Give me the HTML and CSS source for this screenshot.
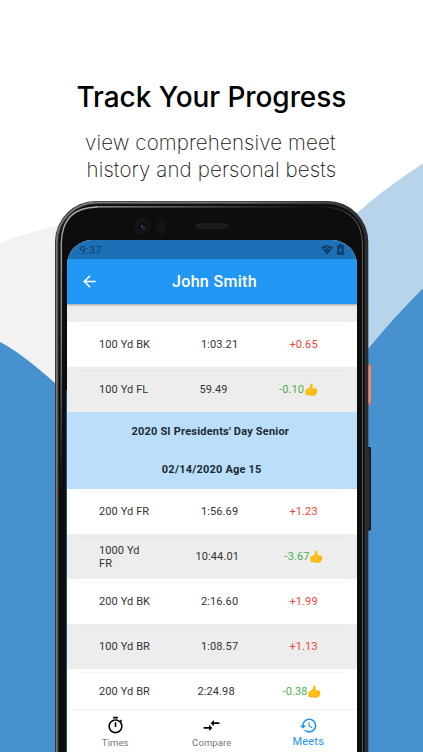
FILE: index.html
```
<!DOCTYPE html>
<html lang="en">
<head>
<meta charset="utf-8">
<title>Track Your Progress</title>
<link rel="stylesheet" href="styles.css">
</head>
<body>
<svg class="backdrop" viewBox="0 0 423 752" aria-hidden="true">
  <defs>
    <linearGradient id="edge" x1="55" x2="368" y1="0" y2="0" gradientUnits="userSpaceOnUse">
      <stop offset="0" stop-color="#777a76"/><stop offset=".6" stop-color="#6c6f6a"/><stop offset="1" stop-color="#303030"/>
    </linearGradient>
    <linearGradient id="shine" x1="0" x2="0" y1="206" y2="490" gradientUnits="userSpaceOnUse">
      <stop offset="0" stop-color="#aaa"/><stop offset=".5" stop-color="#777"/><stop offset="1" stop-color="#0d0d0e"/>
    </linearGradient>
    <linearGradient id="topshine" x1="95" x2="315" y1="0" y2="0" gradientUnits="userSpaceOnUse">
      <stop offset="0" stop-color="#aaa"/><stop offset="1" stop-color="#0d0d0e"/>
    </linearGradient>
    <linearGradient id="sideshine" x1="315" x2="362" y1="0" y2="0" gradientUnits="userSpaceOnUse">
      <stop offset="0" stop-color="#0d0d0e"/><stop offset="1" stop-color="#555"/>
    </linearGradient>
  </defs>
  <path fill="#f2f2f2" d="M0 243Q28 232 65 224V420H0z"/>
  <path fill="#b8d4ea" d="M423 163.500Q382 190 355 215V400H423z"/>
  <path fill="#4691ce" d="M0 342Q20 352 55 383L80 405V752H0zM423 288.500Q394 317 368 349L350 370V752H423z"/>
  <rect x="366" y="364" width="5.200" height="41" rx="1" fill="#d66f5b"/>
  <rect x="368" y="366" width="2.500" height="37" fill="#ed9884"/>
  <rect x="366" y="447" width="5" height="83.500" rx="1" fill="#151617"/>
  <rect x="368" y="449" width="1.500" height="79" fill="#303334"/>
  <rect x="55" y="201" width="313.300" height="620" rx="41" fill="#242625"/>
  <rect x="56.700" y="202.500" width="309.800" height="620" rx="39.500" fill="none" stroke="url(#edge)" stroke-width="1.800"/>
  <rect x="59" y="204.300" width="305.500" height="620" rx="37.500" fill="#0d0d0e"/>
  <path d="M61.300 490V243Q62 207.500 97 207" fill="none" stroke="url(#shine)" stroke-width="1.500"/>
  <path d="M96 206.300H315V207.500H96z" fill="url(#topshine)"/>
  <path d="M315 206.600Q362.500 205 362.500 246V752" fill="none" stroke="url(#sideshine)" stroke-width="1.100"/>
  <circle cx="142" cy="226.500" r="8.500" fill="#131415"/><circle cx="142.500" cy="226.500" r="4.200" fill="#0b0b10"/>
  <circle cx="143.500" cy="228" r="2" fill="#24263e"/><circle cx="141.700" cy="226" r=".7" fill="#8c909d"/>
  <rect x="157" y="219" width="8" height="16" rx="3.500" fill="#131314"/>
  <rect x="195" y="223" width="33" height="6" rx="3" fill="#1b1c1c"/>
  <path d="M66.400 390V752" stroke="#275778"/>
</svg>
<svg class="defs" aria-hidden="true">
  <symbol id="thumb" viewBox="0 0 13 13">
    <path fill="#fdbf16" d="M.6 6.600Q3.600 5.800 4.900 3.400L5.300 1.200Q5.700.2 6.700.6Q8 1.300 7.700 3.300L7.300 5.200H10.800Q12 5.400 11.900 6.500Q12.500 7.300 12.100 8.200Q12.400 9.100 11.800 9.900Q11.900 11 10.900 11.400Q10.600 12.300 9.600 12.400H5.500Q3.500 11.700.6 11.900Q-.1 9 .6 6.600z"/>
    <path fill="none" stroke="#f39a1c" stroke-width=".5" d="M8.600 7.500H11.500M8.700 9.500H11.400M1 11.700Q4 11.300 5.800 12.200H9.400"/>
  </symbol>
</svg>
<main class="page">
  <h1 class="title">Track Your Progress</h1>
  <p class="subtitle"><span class="line first">view comprehensive meet</span><span class="line second">history and personal bests</span></p>
  <section class="screen">
    <div class="status">
      <span class="clock">9:37</span>
      <svg class="wifi" viewBox="0 0 12 10"><path fill="#124068" d="M6 10L0 2.500Q6-2 12 2.500z"/><path fill="none" stroke="#1c70b6" stroke-width=".9" d="M2 4.100Q6 1.200 10 4.100"/></svg>
      <svg class="battery" viewBox="0 0 7 11"><path fill="#124068" d="M2.200 0H4.800V1.200H6.300Q7 1.200 7 2V10.200Q7 11 6.200 11H.8Q0 11 0 10.200V2Q0 1.200.7 1.200H2.200z"/><path fill="#1c70b6" d="M3.900 3L1.600 6.700H3.200V9.300L5.500 5.600H3.900z"/></svg>
    </div>
    <header class="appbar">
      <svg class="back" viewBox="0 0 24 24"><path fill="#fff" d="M20 11H7.830l5.590-5.590L12 4l-8 8 8 8 1.410-1.410L7.830 13H20v-2z"/></svg>
      <h2 class="name">John Smith</h2>
    </header>
    <div class="list">
      <div class="spacer"></div>
      <div class="row"><span>100 Yd BK</span><span>1:03.21</span><span class="up">+0.65</span></div>
      <div class="row alt fl"><span>100 Yd FL</span><span>59.49</span><span class="down">-0.10<svg class="thumb"><use href="#thumb"/></svg></span></div>
      <div class="meet"><strong>2020 SI Presidents' Day Senior</strong><strong class="date">02/14/2020 Age 15</strong></div>
      <div class="row"><span>200 Yd FR</span><span>1:56.69</span><span class="up">+1.23</span></div>
      <div class="row alt long"><span>1000 Yd<br>FR</span><span>10:44.01</span><span class="down">-3.67<svg class="thumb"><use href="#thumb"/></svg></span></div>
      <div class="row"><span>200 Yd BK</span><span>2:16.60</span><span class="up">+1.99</span></div>
      <div class="row alt"><span>100 Yd BR</span><span>1:08.57</span><span class="up">+1.13</span></div>
      <div class="row br"><span>200 Yd BR</span><span>2:24.98</span><span class="down">-0.38<svg class="thumb"><use href="#thumb"/></svg></span></div>
    </div>
    <nav class="tabs">
      <div class="tab"><svg class="icon" viewBox="0 0 24 24"><path d="M15 1H9v2h6V1zm-4 13h2V8h-2v6zm8.030-6.610l1.420-1.420c-.43-.51-.9-.99-1.410-1.410l-1.420 1.420C16.070 4.740 14.120 4 12 4c-4.970 0-9 4.030-9 9s4.020 9 9 9 9-4.030 9-9c0-2.120-.74-4.070-1.970-5.610zM12 20c-3.870 0-7-3.130-7-7s3.130-7 7-7 7 3.130 7 7-3.130 7-7 7z"/></svg><span>Times</span></div>
      <div class="tab"><svg class="icon" viewBox="0 0 24 24"><path d="M9.010 14H2v2h7.010v3L13 15l-3.990-4v3zm5.980-1v-3H22V8h-7.010V5L11 9l3.990 4z"/></svg><span>Compare</span></div>
      <div class="tab active"><svg class="icon" viewBox="0 0 24 24"><path d="M13 3c-4.970 0-9 4.030-9 9H1l3.890 3.890.07.14L9 12H6c0-3.870 3.130-7 7-7s7 3.130 7 7-3.130 7-7 7c-1.930 0-3.680-.79-4.940-2.060l-1.420 1.420C8.270 19.990 10.510 21 13 21c4.970 0 9-4.030 9-9s-4.030-9-9-9zm-1 5v5l4.280 2.540.72-1.210-3.500-2.080V8H12z"/></svg><span>Meets</span></div>
    </nav>
  </section>
</main>
</body>
</html>
```
FILE: styles.css
```
* { box-sizing: border-box; }
body { margin: 0; width: 423px; height: 752px; overflow: hidden; background: #fff; position: relative; }
.backdrop { position: absolute; inset: 0; width: 423px; height: 752px; }
.defs { position: absolute; width: 0; height: 0; }
.page { position: relative; height: 752px; display: flex; flex-direction: column; font-family: Roboto, sans-serif; }
.title { margin: 79px 0 0 76.500px; height: 36px; font: 500 28px/36px Inter, sans-serif; letter-spacing: -.07px; color: #000; white-space: nowrap; }
.subtitle { margin: 14px 0 0 85px; height: 54px; font: 200 20.500px/27px Inter, sans-serif; letter-spacing: .13px; color: #111; }
.line { display: block; white-space: nowrap; }
.second { margin-left: 1.500px; }
.screen { margin: 57px 0 0 67px; width: 289.500px; height: 512px; border-radius: 25px 25px 0 0; overflow: hidden; display: flex; flex-direction: column; background: #fff; }
.status { height: 19px; flex: none; background: #1c70b6; display: flex; align-items: center; padding-left: 12.500px; color: #124068; }
.clock { font-size: 11.500px; line-height: 19px; width: 241.500px; padding-top: 1px; }
.wifi { width: 12px; height: 10px; }
.battery { width: 7px; height: 11px; margin-left: 4px; }
.appbar { height: 45px; flex: none; background: #2196f3; display: flex; align-items: center; position: relative; z-index: 1; box-shadow: 0 1px 2px rgba(0,0,0,.35); }
.back { width: 19px; height: 19px; margin-left: 13px; }
.name { margin: 0 0 0 73px; font-size: 16px; line-height: 20px; font-weight: 500; letter-spacing: .33px; color: #fff; white-space: nowrap; }
.list { height: 405px; flex: none; font-size: 11px; letter-spacing: .1px; line-height: 13px; color: #333; }
.spacer { height: 17.500px; background: #ededed; }
.row { height: 45px; display: grid; grid-template-columns: 102px 88.500px 1fr; align-items: center; padding-left: 32px; white-space: nowrap; background: linear-gradient(rgba(0,0,0,.035), rgba(0,0,0,.035)) 13px 3px / 264px 1px no-repeat #fff; }
.alt { background-color: #ededed; }
.fl { grid-template-columns: 100.500px 79.500px 1fr; }
.long { grid-template-columns: 96.500px 89px 1fr; }
.br { grid-template-columns: 98.500px 85px 1fr; }
.up { color: #f44336; }
.down { color: #4caf50; display: flex; align-items: center; }
.thumb { width: 13px; height: 13px; margin-left: .5px; }
.meet { height: 77.500px; background: #bbdefb; display: flex; flex-direction: column; align-items: center; padding: 13px 3px 0 0; gap: 25.500px; color: #1c2a31; }
.meet strong { font-weight: 700; letter-spacing: .2px; }
.date { margin-left: 3px; }
.tabs { flex: 1; background: #fff; border-top: 1px solid #f3f3f3; display: flex; position: relative; z-index: 1; }
.tab { flex: 1; display: flex; flex-direction: column; align-items: center; padding-top: 6px; font-size: 9.500px; line-height: 13px; letter-spacing: .1px; color: #777; }
.tab span { margin-top: 1px; }
.icon { width: 19px; height: 19px; fill: #000; }
.active { color: #2196f3; font-size: 11px; letter-spacing: .2px; }
.active span { margin-top: 0; }
.active .icon { fill: #2196f3; }
```
